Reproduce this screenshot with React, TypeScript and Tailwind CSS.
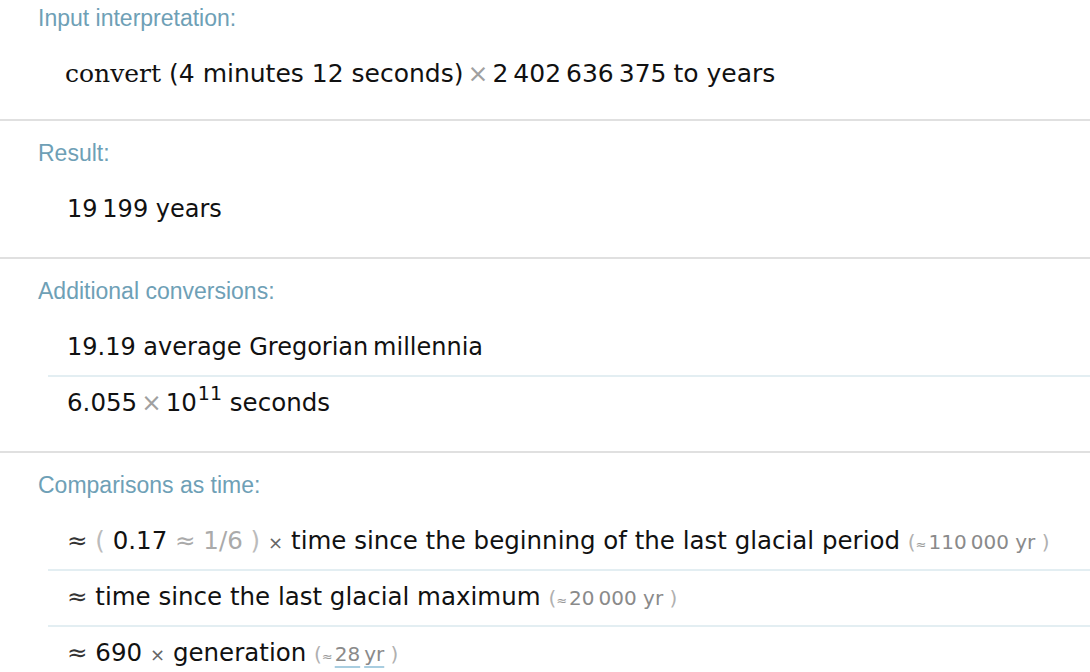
import React from "react";

const sans = "font-['DejaVu_Sans',sans-serif]";
const head = "font-['Liberation_Sans',Arial,sans-serif]";

function Pod({
  title,
  top,
  bottom,
  last,
  children,
}: {
  title: string;
  top: string;
  bottom: string;
  last?: boolean;
  children: React.ReactNode;
}) {
  return (
    <section className={`${top} ${bottom} ${last ? "" : "border-b-2 border-[#e0e0e0]"}`}>
      <h2 className={`${head} pl-[38px] text-[23px] leading-[24px] text-[#6ea0b6]`}>{title}</h2>
      <div className="mt-[28px]">{children}</div>
    </section>
  );
}

function Row({
  first,
  size = "text-[24.5px]",
  children,
}: {
  first?: boolean;
  size?: string;
  children: React.ReactNode;
}) {
  return (
    <div
      className={`ml-[48px] pl-[19px] pb-[12px] h-[44px] ${sans} ${size} leading-[32px] text-[#111] whitespace-nowrap ${
        first ? "" : "border-t-2 border-[#e3eef2] pt-[10px] h-[56px]"
      }`}
    >
      {children}
    </div>
  );
}

const Times = ({ small }: { small?: boolean }) =>
  small ? (
    <span className="text-[18px] leading-none text-[#666] mr-[8px]">×</span>
  ) : (
    <span className="text-[#a0a0a0] mx-[4px]">×</span>
  );

function Note({ children }: { children: React.ReactNode }) {
  return (
    <span className="text-[20px] leading-none text-[#8a8a8a]">
      <span className="text-[#b0b0b0]">(</span>
      <span className="text-[13px] text-[#999] mr-[2px]">≈</span>
      {children}
      <span className="text-[#b0b0b0]"> )</span>
    </span>
  );
}

export default function App() {
  return (
    <div className="w-[1090px] h-[672px] bg-white overflow-hidden">
      <Pod title="Input interpretation:" top="pt-[6px]" bottom="pb-[17px]">
        <Row first size="text-[25px]">
          <span className="font-['DejaVu_Serif',serif] -ml-[2px]">convert</span> (4 minutes 12 seconds)
          <Times />2{"\u2009"}402{"\u2009"}636{"\u2009"}375
          <span className="ml-[7px]">to years</span>
        </Row>
      </Pod>

      <Pod title="Result:" top="pt-[20px]" bottom="pb-[20px]">
        <Row first size="text-[24px]">
          19{"\u2009"}199 years
        </Row>
      </Pod>

      <Pod title="Additional conversions:" top="pt-[20px]" bottom="pb-[20px]">
        <Row first size="text-[24px]">
          19.19 average Gregorian{"\u2009"}millennia
        </Row>
        <Row>
          6.055<Times />10
          <sup className="text-[19px] leading-none -top-[11px] ml-[1px]">11</sup> seconds
        </Row>
      </Pod>

      <Pod title="Comparisons as time:" top="pt-[20px]" bottom="pb-0" last>
        <Row first>
          <span className="text-[#333]">≈</span> <span className="text-[#bbb]">(</span> 0.17{" "}
          <span className="text-[#aaa]">≈ 1/6</span> <span className="text-[#bbb]">)</span>{" "}
          <Times small />
          time since the beginning of the last glacial period{" "}
          <Note>110{"\u2009"}000 yr</Note>
        </Row>
        <Row>
          <span className="text-[#333]">≈</span> time since the last glacial maximum{" "}
          <Note>20{"\u2009"}000 yr</Note>
        </Row>
        <Row>
          <span className="text-[#333]">≈</span> 690 <Times small />
          generation{" "}
          <Note>
            <span className="underline decoration-[#a8cde0] decoration-2 underline-offset-[5px]">28</span>{"\u2009"}
            <span className="underline decoration-[#a8cde0] decoration-2 underline-offset-[5px]">yr</span>
          </Note>
        </Row>
      </Pod>
    </div>
  );
}
